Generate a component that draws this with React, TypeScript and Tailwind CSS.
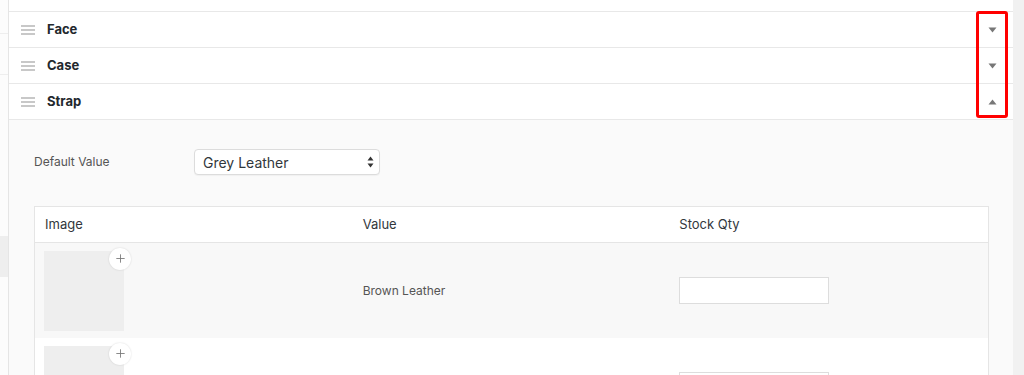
import { Plus } from "lucide-react";

const SECTIONS = [
  { name: "Face", open: false },
  { name: "Case", open: false },
  { name: "Strap", open: true },
];

const ROWS = [
  { id: "brown", value: "Brown Leather", shade: true },
  { id: "next", value: "", shade: false },
];

function Handle() {
  return (
    <div className="flex w-[14px] flex-col gap-[2px]">
      <span className="h-[2px] bg-[#c8c8c8]" />
      <span className="h-[2px] bg-[#c8c8c8]" />
      <span className="h-[2px] bg-[#c8c8c8]" />
    </div>
  );
}

function Caret({ up }: { up: boolean }) {
  return (
    <svg width="9" height="6" viewBox="0 0 9 6" className="text-[#777]">
      {up ? (
        <path d="M4.5 0.5L8.5 5.5H0.5Z" fill="currentColor" />
      ) : (
        <path d="M0.5 0.5H8.5L4.5 5.5Z" fill="currentColor" />
      )}
    </svg>
  );
}

export default function App() {
  return (
    <div className="flex h-[375px] w-[1024px] overflow-hidden bg-white font-['Inter','Liberation_Sans',sans-serif]">
      {/* left edge of the neighbouring list */}
      <div className="flex w-[9px] shrink-0 flex-col border-r border-[#e5e5e5] bg-[#fcfcfc]">
        <div className="h-[34px] border-b border-[#eee]" />
        <div className="h-[41px] border-b border-[#eee]" />
        <div className="h-[161px]" />
        <div className="h-[41px] bg-[#eeeeee]" />
      </div>

      <div className="relative flex min-w-0 flex-1 flex-col bg-[#fafafa]">
        <div className="h-[12px] shrink-0 border-b border-[#e8e8e8] bg-white" />
        {SECTIONS.map((s) => (
          <div
            key={s.name}
            className="flex h-[36px] shrink-0 items-center border-b border-[#e8e8e8] bg-white pl-[12px] pr-[16px]"
          >
            <Handle />
            <span className="ml-[12px] flex-1 text-[13px] font-bold text-[#23282d]">
              {s.name}
            </span>
            <Caret up={s.open} />
          </div>
        ))}

        <div className="flex-1 px-[25px] pt-[29px]">
          <div className="flex h-[26px] items-center">
            <span className="w-[160px] text-[12px] text-[#555]">Default Value</span>
            <div className="flex h-[26px] w-[186px] items-center justify-between rounded-[4px] border border-[#dcdcdc] bg-white pl-[8px] pr-[5px] shadow-[0_1px_1px_rgba(0,0,0,0.04)]">
              <span className="text-[14px] text-[#32373c]">Grey Leather</span>
              <svg width="7" height="12" viewBox="0 0 7 12" className="text-[#333]">
                <path d="M3.5 0.5L6.5 4.5H0.5Z" fill="currentColor" />
                <path d="M0.5 7.5H6.5L3.5 11.5Z" fill="currentColor" />
              </svg>
            </div>
          </div>

          <div className="mt-[31px] w-[955px] border border-[#e5e5e5] bg-white">
            <div className="grid h-[36px] grid-cols-3 items-center border-b border-[#e5e5e5] text-[13px] text-[#32373c]">
              <span className="pl-[10px]">Image</span>
              <span className="pl-[10px]">Value</span>
              <span className="pl-[9px]">Stock Qty</span>
            </div>
            {ROWS.map((r) => (
              <div
                key={r.id}
                className={`grid h-[95px] grid-cols-3 items-center ${r.shade ? "bg-[#f8f8f8]" : "bg-white"}`}
              >
                <div className="pl-[9px]">
                  <div className="relative h-[80px] w-[80px] bg-[#eeeeee]">
                    <span className="absolute -right-[7px] -top-[3px] flex h-[22px] w-[22px] items-center justify-center rounded-full bg-white shadow-[0_0_2px_rgba(0,0,0,0.15)]">
                      <Plus className="h-[13px] w-[13px] text-[#777]" strokeWidth={1.6} />
                    </span>
                  </div>
                </div>
                <span className="pl-[10px] text-[12px] text-[#555]">{r.value}</span>
                <div className="pl-[9px]">
                  <div className="h-[27px] w-[150px] border border-[#dddddd] bg-white" />
                </div>
              </div>
            ))}
          </div>
        </div>

        {/* highlight around the toggles */}
        <div className="pointer-events-none absolute left-[967px] top-[11px] h-[107px] w-[32px] rounded-[3px] border-[3px] border-[#ff0000]" />
      </div>

      <div className="w-[11px] shrink-0 bg-[#f1f1f1]" />
    </div>
  );
}
